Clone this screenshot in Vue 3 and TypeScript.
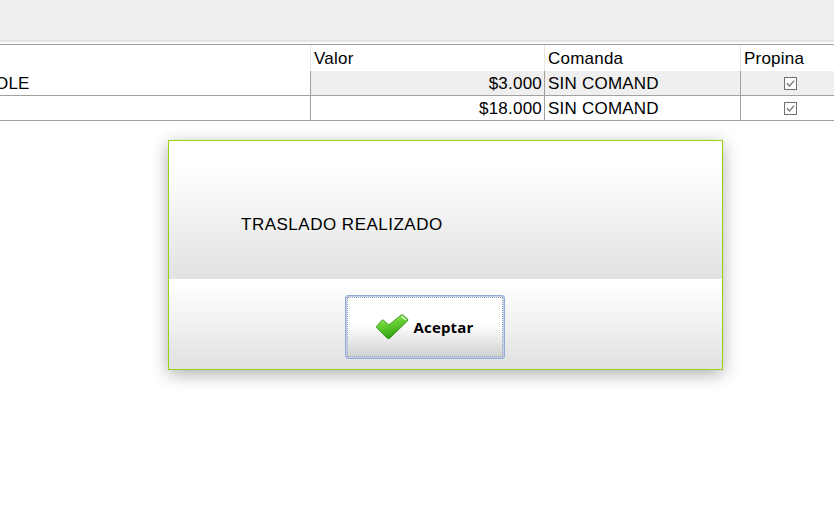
<script setup lang="ts">
interface Row {
  name: string
  valor: string
  comanda: string
  alt: boolean
}

const rows: Row[] = [
  { name: 'OLE', valor: '$3.000', comanda: 'SIN COMAND', alt: true },
  { name: '', valor: '$18.000', comanda: 'SIN COMAND', alt: false },
]
</script>

<template>
  <div class="screen">
    <div class="toolbar" />

    <div class="grid">
      <div class="row head">
        <div class="cell name" />
        <div class="cell">Valor</div>
        <div class="cell">Comanda</div>
        <div class="cell last">Propina</div>
      </div>
      <div v-for="row in rows" :key="row.valor" class="row body" :class="{ alt: row.alt }">
        <div class="cell name clipped"><span>{{ row.name }}</span></div>
        <div class="cell money">{{ row.valor }}</div>
        <div class="cell">{{ row.comanda }}</div>
        <div class="cell last check">
          <svg width="13" height="13" viewBox="0 0 13 13">
            <rect x="0.5" y="0.5" width="12" height="12" fill="#fff" stroke="#707070" />
            <path d="M2.8 6.2 L5.4 9 L10.2 3.6" fill="none" stroke="#707070" stroke-width="1.2" />
          </svg>
        </div>
      </div>
    </div>

    <div class="dialog">
      <div class="message">
        <p>TRASLADO REALIZADO</p>
      </div>
      <div class="actions">
        <button class="accept" type="button">
          <span class="focus">
            <svg width="33" height="26" viewBox="0 0 33 26">
              <defs>
                <linearGradient id="tick" x1="0.1" y1="0" x2="0.45" y2="1">
                  <stop offset="0" stop-color="#c6f2a0" />
                  <stop offset="0.4" stop-color="#6ad433" />
                  <stop offset="1" stop-color="#2c9a10" />
                </linearGradient>
              </defs>
              <path
                d="M0.8 12.2 L5.8 6.4 Q6.8 5.6 7.8 6.4 L12.8 11 L25 1.2 Q26.2 0.4 27.2 1.2 L31.6 5 Q32.2 6 31.4 7 L14 24 Q12.6 25.2 11.2 24.2 L0.9 14 Q0.4 13 0.8 12.2 Z"
                fill="url(#tick)"
                stroke="#3f9a1e"
                stroke-width="1"
                stroke-linejoin="round"
              />
              <path d="M25.6 2.4 L30 6" stroke="#e2fad0" stroke-width="1.4" fill="none" />
            </svg>
            <span class="label">Aceptar</span>
          </span>
        </button>
      </div>
    </div>
  </div>
</template>

<style>
html,
body {
  margin: 0;
  background: #fff;
}
</style>

<style scoped>
.screen {
  position: relative;
  width: 834px;
  height: 517px;
  overflow: hidden;
  background: #fff;
  font-family: "Liberation Sans", Arial, sans-serif;
  font-size: 17px;
  color: #000;
}

.toolbar {
  height: 40px;
  background: #efefef;
  border-bottom: 2px solid #e3e3e3;
  margin-bottom: 2px;
}

.grid {
  border-top: 1px solid #a0a0a0;
}

.row {
  display: grid;
  grid-template-columns: 311px 234px 196px 1fr;
}

.head {
  height: 26px;
}

.body {
  height: 25px;
  box-sizing: border-box;
  border-bottom: 1px solid #a0a0a0;
}

.cell {
  box-sizing: border-box;
  padding: 0 2px 0 3px;
  border-right: 1px solid #a0a0a0;
  white-space: nowrap;
  letter-spacing: 0.22px;
}

.body .cell {
  height: 24px;
  line-height: 25px;
}

.head .cell {
  border-right-color: #e4e4e4;
  line-height: 27px;
}

.last {
  border-right: 0;
}

.clipped {
  overflow: hidden;
  padding: 0;
}

.clipped span {
  display: block;
  margin-left: -5px;
}

.money {
  text-align: right;
  background: #efefef;
}

.body:not(.alt) .money {
  background: #fff;
}

.alt .cell:not(.name) {
  background: #efefef;
}

.check {
  display: flex;
  align-items: center;
  justify-content: center;
  padding-left: 7px;
}

.dialog {
  position: absolute;
  left: 168px;
  top: 140px;
  width: 555px;
  height: 230px;
  box-sizing: border-box;
  border: 1px solid #9ad10f;
  box-shadow: 0 4px 16px rgba(0, 0, 0, 0.32);
  display: flex;
  flex-direction: column;
}

.message {
  height: 138px;
  display: flex;
  align-items: center;
  padding-left: 72px;
  background: linear-gradient(#fff 20%, #e2e2e2);
}

.message p {
  margin: 0;
  font-size: 17px;
  letter-spacing: 0.5px;
  position: relative;
  top: 15px;
}

.actions {
  flex: 1;
  display: flex;
  justify-content: center;
  align-items: flex-start;
  padding-top: 17px;
  padding-right: 41px;
  background: linear-gradient(#fff 5%, #e2e2e2 95%);
}

.accept {
  width: 160px;
  height: 64px;
  margin-top: -1px;
  padding: 1px;
  border: 1px solid #93a9d6;
  border-radius: 3px;
  background: linear-gradient(#fff 45%, #d0d0d0);
  box-shadow: inset 0 0 0 1px #c0cff0;
  font-family: "Open Sans", "Liberation Sans", sans-serif;
}

.focus {
  display: flex;
  align-items: center;
  justify-content: center;
  gap: 5px;
  height: 100%;
  box-sizing: border-box;
  border: 1px dotted #98a0b0;
  padding-right: 1px;
}

.label {
  font-size: 15px;
  font-weight: 700;
  letter-spacing: 0.15px;
  color: #000;
}
</style>
